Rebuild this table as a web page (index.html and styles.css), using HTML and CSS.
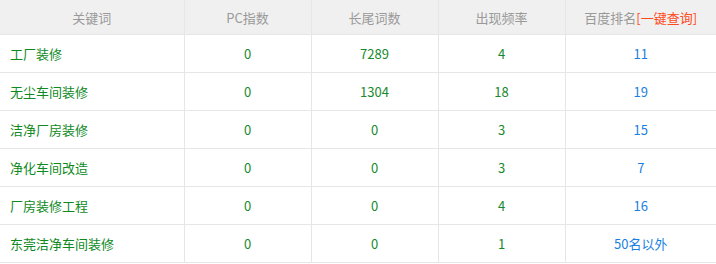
FILE: index.html
```html
<!DOCTYPE html>
<html lang="zh-CN">
<head>
<meta charset="utf-8">
<link rel="stylesheet" href="styles.css">
</head>
<body>
<table class="kw-table">
  <colgroup>
    <col class="c1"><col class="c2"><col class="c3"><col class="c4"><col class="c5">
  </colgroup>
  <thead>
    <tr>
      <th>关键词</th>
      <th>PC指数</th>
      <th>长尾词数</th>
      <th>出现频率</th>
      <th>百度排名<span class="query">[一键查询]</span></th>
    </tr>
  </thead>
  <tbody>
    <tr><td class="kw">工厂装修</td><td>0</td><td>7289</td><td>4</td><td class="rank">11</td></tr>
    <tr><td class="kw">无尘车间装修</td><td>0</td><td>1304</td><td>18</td><td class="rank">19</td></tr>
    <tr><td class="kw">洁净厂房装修</td><td>0</td><td>0</td><td>3</td><td class="rank">15</td></tr>
    <tr><td class="kw">净化车间改造</td><td>0</td><td>0</td><td>3</td><td class="rank">7</td></tr>
    <tr><td class="kw">厂房装修工程</td><td>0</td><td>0</td><td>4</td><td class="rank">16</td></tr>
    <tr><td class="kw">东莞洁净车间装修</td><td>0</td><td>0</td><td>1</td><td class="rank">50名以外</td></tr>
  </tbody>
</table>
</body>
</html>
```
FILE: styles.css
```css
html, body {
  margin: 0;
  padding: 0;
  background: #fff;
}
.kw-table {
  width: 716px;
  border-collapse: collapse;
  table-layout: fixed;
  font-family: "Noto Sans CJK SC", "Noto Sans", sans-serif;
  font-size: 13px;
}
.c1 { width: 184px; }
.c2 { width: 127px; }
.c3 { width: 127px; }
.c4 { width: 127px; }
.c5 { width: 151px; }
.kw-table th {
  height: 34px;
  padding: 0;
  background: #f0f0f0;
  color: #999;
  font-weight: normal;
  text-align: center;
  border-left: 1px solid #e6e6e6;
  border-bottom: 1px solid #e6e6e6;
}
.kw-table td {
  height: 37px;
  padding: 0;
  text-align: center;
  color: #168a2c;
  border-left: 1px solid #e6e6e6;
  border-bottom: 1px solid #e6e6e6;
}
.kw-table th:first-child,
.kw-table td:first-child {
  border-left: none;
}
.kw-table td.kw {
  text-align: left;
  padding-left: 10px;
  color: #0f8a1e;
}
.kw-table td.rank {
  color: #1a7fe0;
}
.query {
  color: #ff4a1a;
}
```
